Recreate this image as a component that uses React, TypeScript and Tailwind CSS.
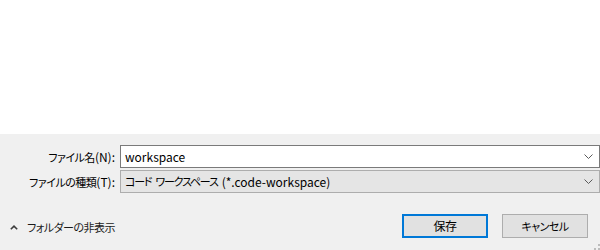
import { ReactNode } from 'react'

const jp = "[font-family:'Noto_Sans_CJK_JP',sans-serif] [font-feature-settings:'palt']"

function ChevronDown() {
  return (
    <svg width="9" height="5" viewBox="0 0 9 5" className="shrink-0">
      <polyline points="0.5,0.5 4.5,4.5 8.5,0.5" fill="none" stroke="#5a5a5a" strokeWidth="1" />
    </svg>
  )
}

// latin runs keep normal width, the kana are squeezed to match Yu Gothic UI
function Latin({ children }: { children: ReactNode }) {
  return <span className="text-[12px] tracking-normal">{children}</span>
}

function Field({ label, tone, children }: { label: ReactNode; tone: 'input' | 'select'; children: ReactNode }) {
  const box =
    tone === 'input'
      ? 'border-[#7a7a7a] bg-white'
      : 'border-[#adadad] bg-[#e5e5e5]'
  return (
    <div className="flex items-center">
      <div className="w-[118px] pr-[1px] text-right leading-none text-black">{label}</div>
      <div className={`ml-[4px] flex h-[23px] w-[480px] shrink-0 items-center justify-between border pl-[4px] pr-[6px] ${box}`}>
        <span className="flex items-center leading-none text-black">{children}</span>
        <ChevronDown />
      </div>
    </div>
  )
}

export default function App() {
  return (
    <div className={`flex h-[250px] w-[600px] flex-col overflow-hidden bg-white text-[11px] tracking-[-0.5px] ${jp}`}>
      <div className="h-[134px] shrink-0 bg-white" />
      <div className="relative flex flex-1 flex-col bg-[#f0f0f0] pt-[11px]">
        <div className="flex flex-col gap-[2px]">
          <Field label={<>ファイル名<Latin>(N):</Latin></>} tone="input">
            <Latin>workspace</Latin>
          </Field>
          <Field label={<>ファイルの種類<Latin>(T):</Latin></>} tone="select">
            <span className="tracking-[-1.2px]">コード</span>
            <span className="ml-[4px] tracking-[-1.2px]">ワークスペース</span>
            <span className="ml-[4px]">
              <Latin>(*.code-workspace)</Latin>
            </span>
          </Field>
        </div>

        <div className="mt-[21px] flex items-center justify-between pr-[12px]">
          <div className="flex items-center gap-[9px] pl-[10px] pt-[3px] leading-none text-[#1a1a1a]">
            <svg width="8" height="5" viewBox="0 0 8 5">
              <polyline points="0.8,4.3 4,1.2 7.2,4.3" fill="none" stroke="#3c3c3c" strokeWidth="1.6" />
            </svg>
            <span>フォルダーの非表示</span>
          </div>
          <div className="flex items-center gap-[14px]">
            <button
              type="button"
              className="flex h-[24px] w-[86px] items-center justify-center border-2 border-[#0078d7] bg-[#e1e1e1] text-[12px] leading-none text-black"
            >
              保存
            </button>
            <button
              type="button"
              className="flex h-[24px] w-[86px] items-center justify-center border border-[#adadad] bg-[#e1e1e1] leading-none text-black"
            >
              キャンセル
            </button>
          </div>
        </div>

        <svg width="8" height="8" viewBox="0 0 8 8" className="absolute bottom-0 right-0">
          <rect x="6" y="2" width="2" height="2" fill="#bcbcbc" />
          <rect x="2" y="6" width="2" height="2" fill="#bcbcbc" />
          <rect x="6" y="6" width="2" height="2" fill="#bcbcbc" />
        </svg>
      </div>
    </div>
  )
}
